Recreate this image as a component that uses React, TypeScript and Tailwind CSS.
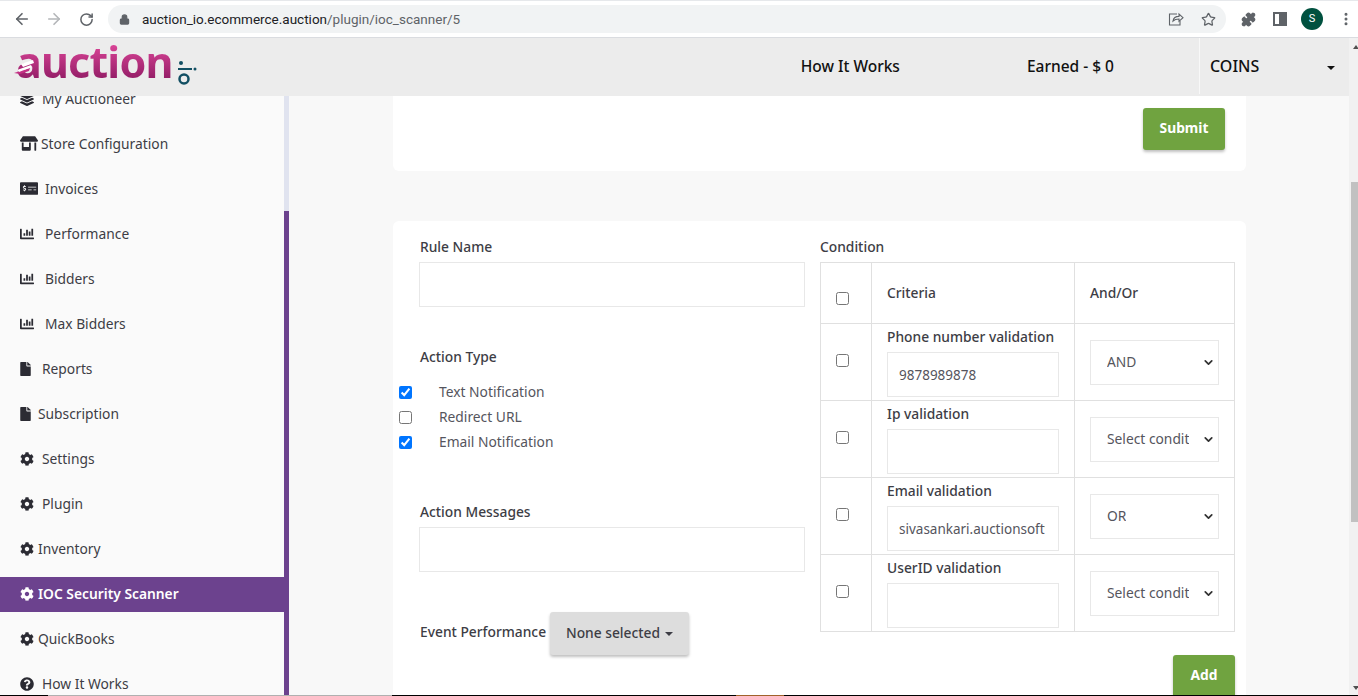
import { ArrowLeft, ArrowRight, RotateCw, Lock, Star, Puzzle, MoreVertical, ChevronDown } from 'lucide-react';
import { FaLayerGroup, FaStoreAlt, FaMoneyCheckAlt, FaChartBar, FaFile, FaCog, FaQuestionCircle } from 'react-icons/fa';

const FONT = "font-['Noto_Sans',sans-serif]";

const NAV = [
  { label: 'My Auctioneer', icon: FaLayerGroup, slot: 'w-[22px]', size: 'w-[14px] h-[14px]' },
  { label: 'Store Configuration', icon: FaStoreAlt, slot: 'w-[21px]', size: 'w-[18px] h-[15px]' },
  { label: 'Invoices', icon: FaMoneyCheckAlt, slot: 'w-[25px]', size: 'w-[18px] h-[15px]' },
  { label: 'Performance', icon: FaChartBar, slot: 'w-[25px]', size: 'w-[14px] h-[14px]' },
  { label: 'Bidders', icon: FaChartBar, slot: 'w-[25px]', size: 'w-[14px] h-[14px]' },
  { label: 'Max Bidders', icon: FaChartBar, slot: 'w-[25px]', size: 'w-[14px] h-[14px]' },
  { label: 'Reports', icon: FaFile, slot: 'w-[22px]', size: 'w-[11px] h-[14px]' },
  { label: 'Subscription', icon: FaFile, slot: 'w-[18px]', size: 'w-[11px] h-[14px]' },
  { label: 'Settings', icon: FaCog, slot: 'w-[22px]', size: 'w-[14px] h-[14px]' },
  { label: 'Plugin', icon: FaCog, slot: 'w-[22px]', size: 'w-[14px] h-[14px]' },
  { label: 'Inventory', icon: FaCog, slot: 'w-[18px]', size: 'w-[14px] h-[14px]' },
  { label: 'IOC Security Scanner', icon: FaCog, slot: 'w-[18px]', size: 'w-[14px] h-[14px]', active: true },
  { label: 'QuickBooks', icon: FaCog, slot: 'w-[18px]', size: 'w-[14px] h-[14px]' },
  { label: 'How It Works', icon: FaQuestionCircle, slot: 'w-[22px]', size: 'w-[14px] h-[14px]' },
];

const ROWS = [
  { label: 'Phone number validation', value: '9878989878', option: 'AND' },
  { label: 'Ip validation', value: '', option: 'Select condition' },
  { label: 'Email validation', value: 'sivasankari.auctionsoftware.com', option: 'OR' },
  { label: 'UserID validation', value: '', option: 'Select condition' },
];

function ChromeBar() {
  return (
    <div className="h-[38px] shrink-0 bg-white border-t border-t-[#e6e8eb] border-b border-b-[#dadce0] flex items-center text-[#5f6368]">
      <ArrowLeft className="w-[18px] h-[18px] ml-[13px]" strokeWidth={2.2} />
      <ArrowRight className="w-[18px] h-[18px] ml-[14px] text-[#b4b6b9]" strokeWidth={2.2} />
      <RotateCw className="w-[15px] h-[15px] ml-[16px]" strokeWidth={2.4} />
      <div className="ml-[14px] w-[1118px] h-[28px] rounded-full bg-[#f1f3f4] flex items-center">
        <Lock className="w-[11px] h-[11px] ml-[11px] fill-[#5f6368]" strokeWidth={2.5} />
        <div className="ml-[12px] text-[13.5px] font-['Roboto',sans-serif] text-[#202124] whitespace-nowrap">
          auction_io.ecommerce.auction<span className="text-[#5f6368]">/plugin/ioc_scanner/5</span>
        </div>
        <svg className="ml-auto" width="16" height="16" viewBox="0 0 16 16" fill="none" stroke="#5f6368" strokeWidth="1.1">
          <path d="M9 3H1.5v11h10.5v-4" />
          <path d="M5 10c.5-3 3-4.6 6-4.6V3l4 3.7-4 3.6V8c-2.500 0-4.500.500-6 2z" />
        </svg>
        <Star className="w-[15px] h-[15px] ml-[17px] mr-[10px]" strokeWidth={2} />
      </div>
      <Puzzle className="w-[15px] h-[15px] ml-[15px] fill-[#5f6368]" strokeWidth={2} />
      <div className="ml-[17px] w-[14px] h-[14px] border-2 border-[#5f6368] flex justify-end">
        <div className="w-[6px] h-full bg-[#5f6368]" />
      </div>
      <div className="ml-[14px] w-[22px] h-[22px] rounded-full bg-[#00513f] text-white text-[11px] font-['Roboto',sans-serif] flex items-center justify-center">
        S
      </div>
      <MoreVertical className="w-[16px] h-[16px] ml-[15px]" strokeWidth={2.5} />
    </div>
  );
}

function Logo() {
  return (
    <div className="flex items-end ml-[16px] h-[40px] mb-[10px]">
      <div className="relative">
        <span className="block text-[43px] leading-[40px] font-['Noto_Sans',sans-serif] font-bold tracking-[-0.8px] bg-gradient-to-b from-[#e0479b] to-[#8e1a63] bg-clip-text text-transparent">
          auction
        </span>
        <svg className="absolute left-[-2px] top-[14px]" width="24" height="20" viewBox="0 0 24 20">
          <path d="M0 17 L16 12 L15 15 L6 18 Z" fill="#c42f84" />
          <path d="M3 14 L17 9 L18 11 L5 16 Z M7 8 L19 4 L20 7 L9 11 Z" fill="#fff" />
        </svg>
      </div>
      <svg className="ml-[5px] mb-[-4px]" width="20" height="26" viewBox="0 0 20 26">
        <circle cx="3" cy="3" r="2" fill="#124f63" />
        <rect x="0" y="8" width="14" height="2" fill="#124f63" />
        <circle cx="17" cy="9" r="1.500" fill="#124f63" />
        <circle cx="6" cy="19" r="4.500" fill="none" stroke="#124f63" strokeWidth="2.500" />
      </svg>
    </div>
  );
}

function SiteHeader() {
  return (
    <div className="h-[58px] shrink-0 bg-[#ececec] flex items-center relative z-10">
      <Logo />
      <div className="ml-auto flex items-center h-full text-[15.500px] font-medium text-[#111]">
        <span className="mr-[127px] whitespace-nowrap">How It Works</span>
        <span className="mr-[85px] whitespace-nowrap">Earned - $ 0</span>
        <div className="w-[150px] h-[56px] mb-[2px] border-l border-[#f8f8f8] pl-[10px] flex items-center justify-between pr-[14px]">
          <span className="text-[16px]">COINS</span>
          <span className="mt-[3px] border-x-[4px] border-x-transparent border-t-[4px] border-t-[#111]" />
        </div>
      </div>
    </div>
  );
}

function Sidebar() {
  return (
    <div className="w-[289px] shrink-0 flex overflow-hidden">
      <div className="w-[284px] bg-[#fafafa] flex flex-col gap-[10px] mt-[-14px]">
        {NAV.map((item) => {
          const Icon = item.icon;
          return (
            <div
              key={item.label}
              className={`h-[35px] shrink-0 flex items-center pl-[20px] text-[13.800px] ${
                item.active ? 'bg-[#6c428e] text-white font-semibold' : 'text-[#3d3d45]'
              }`}
            >
              <span className={`${item.slot} shrink-0 flex items-center mb-[2px]`}>
                <Icon className={`${item.size} ${item.active ? 'text-white' : 'text-[#2b2b33]'}`} />
              </span>
              <span>{item.label}</span>
            </div>
          );
        })}
      </div>
      <div className="w-[5px] flex flex-col">
        <div className="h-[115px] bg-[#e0e3ef]" />
        <div className="flex-1 bg-[#6c428e]" />
      </div>
    </div>
  );
}

function Check({ checked = false }: { checked?: boolean }) {
  return (
    <input
      type="checkbox"
      defaultChecked={checked}
      className="w-[13px] h-[13px] m-0 accent-[#0075ff]"
    />
  );
}

function TextBox({ value = '', className = '' }: { value?: string; className?: string }) {
  return (
    <input
      readOnly
      value={value}
      className={`h-[45px] bg-white border border-[#e8e8e8] text-[13.500px] text-[#55555d] pl-[11px] pr-[13px] outline-none ${className}`}
    />
  );
}

function ConditionTable() {
  return (
    <table className="w-[414px] table-fixed border-collapse border border-[#e0e0e0] text-[13.800px]">
      <colgroup>
        <col className="w-[51px]" />
        <col className="w-[203px]" />
        <col className="w-[160px]" />
      </colgroup>
      <tbody>
        <tr className="h-[61px]">
          <td className="border border-[#e0e0e0] pl-[15px]">
            <div className="flex mt-[11px]"><Check /></div>
          </td>
          <td className="border border-[#e0e0e0] pl-[15px] font-medium text-[#3d3d45]">Criteria</td>
          <td className="border border-[#e0e0e0] pl-[15px] font-medium text-[#3d3d45]">And/Or</td>
        </tr>
        {ROWS.map((row) => (
          <tr key={row.label} className="h-[77px]">
            <td className="border border-[#e0e0e0] pl-[15px]">
              <div className="flex mb-[3px]"><Check /></div>
            </td>
            <td className="border border-[#e0e0e0] pl-[15px] align-top">
              <div className="h-[28px] leading-[25px] font-medium text-[#3d3d45] whitespace-nowrap">{row.label}</div>
              <TextBox value={row.value} className="w-[172px] block" />
            </td>
            <td className="border border-[#e0e0e0] pl-[15px]">
              <div className="relative w-[129px] h-[45px] border border-[#e8e8e8] bg-white flex items-center pl-[16px] pr-[29px] text-[#55555d]">
                <span className="overflow-hidden whitespace-nowrap">{row.option}</span>
                <ChevronDown className="absolute right-[3px] top-[15px] w-[13px] h-[13px] text-[#333]" strokeWidth={3.2} />
              </div>
            </td>
          </tr>
        ))}
      </tbody>
    </table>
  );
}

function RuleForm() {
  return (
    <div className="bg-white rounded-t-[6px] mt-[50px] h-[600px] pl-[27px] pr-[11px] pt-[18px] flex">
      <div className="w-[385px] shrink-0 flex flex-col text-[13.800px] text-[#3d3d45]">
        <div className="h-[23px] leading-[16px] font-medium">Rule Name</div>
        <TextBox className="ml-[-1px]" />
        <div className="mt-[42px] h-[30px] leading-[16px] font-medium">Action Type</div>
        <div className="ml-[-21px] flex flex-col">
          {[
            { label: 'Text Notification', checked: true },
            { label: 'Redirect URL', checked: false },
            { label: 'Email Notification', checked: true },
          ].map((opt) => (
            <label key={opt.label} className="h-[25px] flex items-center">
              <span className="flex mt-[1px]"><Check checked={opt.checked} /></span>
              <span className="ml-[27px] mt-[2px] text-[#55555d]">{opt.label}</span>
            </label>
          ))}
        </div>
        <div className="mt-[50px] h-[23px] leading-[16px] font-medium">Action Messages</div>
        <TextBox className="ml-[-1px]" />
        <div className="mt-[40px] flex items-center">
          <span className="w-[130px] mb-[3px] font-medium whitespace-nowrap">Event Performance</span>
          <button className="w-[139px] h-[43px] rounded-[3px] bg-[#dddddd] shadow-[0_2px_3px_rgba(0,0,0,0.25)] font-medium flex items-center justify-center">
            None selected
            <span className="ml-[5px] mt-[1px] border-x-[4px] border-x-transparent border-t-[4px] border-t-[#3d3d45]" />
          </button>
        </div>
      </div>
      <div className="ml-[15px] flex flex-col">
        <div className="h-[23px] leading-[16px] text-[13.800px] font-medium text-[#3d3d45]">Condition</div>
        <ConditionTable />
        <div className="flex justify-end mt-[23px]">
          <button className="w-[62px] h-[43px] pb-[3px] rounded-[3px] bg-[#70a340] text-white text-[13.800px] font-bold shadow-[0_2px_3px_rgba(0,0,0,0.25)]">
            Add
          </button>
        </div>
      </div>
    </div>
  );
}

function ScrollTrack() {
  return (
    <div className="w-[9px] shrink-0 bg-[#f1f1f1] flex flex-col">
      <span className="ml-[4px] mt-[7px] w-0 border-x-[3px] border-x-transparent border-b-[4px] border-b-[#505050]" />
      <div className="mt-[133px] ml-[2px] h-[340px] bg-[#c1c1c1]" />
      <span className="ml-[4px] mt-[164px] w-0 border-x-[3px] border-x-transparent border-t-[4px] border-t-[#505050]" />
    </div>
  );
}

// 1px strip along the bottom edge of the capture
function BottomEdge() {
  return (
    <div className="h-[1px] shrink-0 flex bg-black">
      <div className="w-[48px]" />
      <div className="w-[344px] bg-[#b0b0b0]" />
      <div className="w-[344px]" />
      <div className="w-[48px] bg-[#a0622a]" />
    </div>
  );
}

export default function App() {
  return (
    <div className={`w-[1358px] h-[696px] overflow-hidden flex flex-col bg-white ${FONT}`}>
      <ChromeBar />
      <div className="flex-1 min-h-0 flex">
        <div className="flex-1 min-w-0 flex flex-col">
          <SiteHeader />
          <div className="flex-1 min-h-0 flex overflow-hidden bg-[#f8f8f8]">
            <Sidebar />
            <div className="flex-1 min-w-0 pl-[104px] pr-[103px]">
              <div className="bg-white rounded-b-[6px] h-[75px] flex justify-end items-start pt-[12px] pr-[21px]">
                <button className="w-[82px] h-[42px] pb-[1px] rounded-[3px] bg-[#70a340] text-white text-[13.800px] font-bold shadow-[0_2px_3px_rgba(0,0,0,0.25)]">
                  Submit
                </button>
              </div>
              <RuleForm />
            </div>
          </div>
        </div>
        <ScrollTrack />
      </div>
      <BottomEdge />
    </div>
  );
}
